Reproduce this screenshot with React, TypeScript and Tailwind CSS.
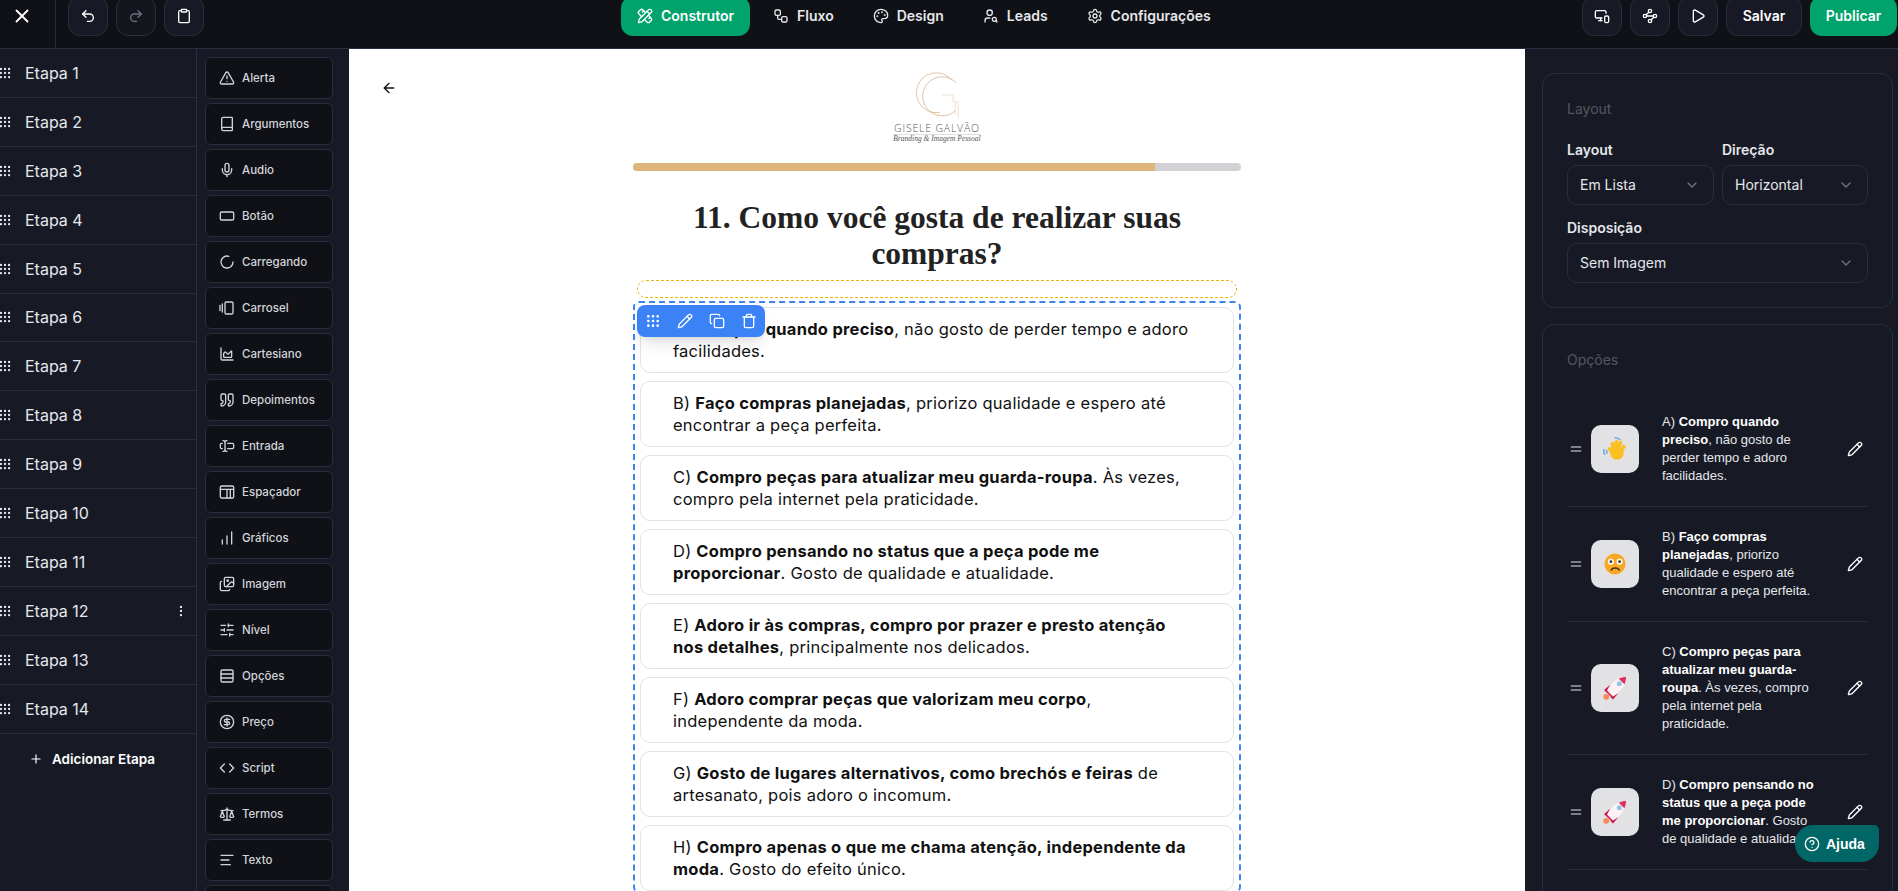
import type { ReactNode } from "react";
import {
  AlignLeft,
  ArrowLeft,
  Book,
  ChartArea,
  ChartNoAxesColumnIncreasing,
  ChevronDown,
  CircleDollarSign,
  CircleHelp,
  Clipboard,
  Code,
  Copy,
  EllipsisVertical,
  Equal,
  Grip,
  Images,
  LoaderCircle,
  MessageSquare,
  Mic,
  MonitorSmartphone,
  Palette,
  Pencil,
  PencilRuler,
  Play,
  Plus,
  Quote,
  RectangleHorizontal,
  Redo2,
  Rows3,
  Scale,
  Settings,
  SlidersHorizontal,
  TextCursorInput,
  Trash,
  TriangleAlert,
  Undo2,
  UserSearch,
  Waypoints,
  Workflow,
  X,
} from "lucide-react";

const CarouselIcon = ({ size = 16 }: { size?: number }) => (
  <svg width={size} height={size} viewBox="0 0 24 24" fill="none" stroke="currentColor" strokeWidth="2" strokeLinecap="round" strokeLinejoin="round">
    <rect x="9" y="3" width="12" height="18" rx="2" />
    <path d="M5 6v12" />
    <path d="M1.5 8v8" />
  </svg>
);

const SpacerIcon = ({ size = 16 }: { size?: number }) => (
  <svg width={size} height={size} viewBox="0 0 24 24" fill="none" stroke="currentColor" strokeWidth="2" strokeLinecap="round" strokeLinejoin="round">
    <rect x="2" y="3" width="20" height="18" rx="2" />
    <path d="M2 8h20" />
    <path d="M12 8v13" />
    <path d="M17 8v13" />
  </svg>
);

const WaveEmoji = () => (
  <svg width="24" height="24" viewBox="0 0 24 24" fill="none">
    <path d="M12 .8c2 0 3.500.5 5 1.700M1 12.500c-.6 1.800-.2 3.500.8 4.800M3.700 13.500c-.3 1-.1 1.800.5 2.600" stroke="#6ea8e8" strokeWidth="1.500" strokeLinecap="round" />
    <g stroke="#fbbf24" strokeWidth="3.600" strokeLinecap="round">
      <path d="M10 13L9.500 6.500" />
      <path d="M12.500 12L13.500 4.500" />
      <path d="M15.500 12L17.500 5.500" />
      <path d="M18 14L21 9.500" />
      <path d="M11 17L6.500 12" />
    </g>
    <ellipse cx="14" cy="16" rx="6.800" ry="6.800" fill="#fbbf24" />
  </svg>
);

const FrownEmoji = () => (
  <svg width="22" height="22" viewBox="0 0 24 24">
    <circle cx="12" cy="12" r="11.500" fill="#f9a825" />
    <circle cx="7.500" cy="9.500" r="3.300" fill="#fff" />
    <circle cx="17" cy="9.500" r="3.300" fill="#fff" />
    <circle cx="7.500" cy="9.500" r="1.500" fill="#3f3028" />
    <circle cx="17" cy="9.500" r="1.500" fill="#3f3028" />
    <path d="M8 18.500c1.500-2.800 7-2.800 8.500 0" fill="none" stroke="#3f3028" strokeWidth="1.800" strokeLinecap="round" />
  </svg>
);

const RocketEmoji = () => (
  <svg width="24" height="24" viewBox="0 0 24 24">
    <circle cx="3.200" cy="20.800" r="2.900" fill="#f58a5c" />
    <path d="M7 9L1 14l2.500 2.500L6.500 14z" fill="#c8184a" />
    <path d="M15 17.500L10 23.500 7.500 21l3-2.500z" fill="#c8184a" />
    <path d="M23 1c0 7-5 15-13 19.500L4 14.500C8 6 16 1 23 1z" fill="#fdf3f5" />
    <path d="M23 1c-2.500 0-5 .7-7.200 1.700l5.600 5.500C22.400 6 23 3.500 23 1z" fill="#dd2e5d" />
    <path d="M4 14.500l6 6-1.500 1L3 16z" fill="#dd2e5d" />
    <circle cx="16.300" cy="7.700" r="2.500" fill="#8ec5e8" />
  </svg>
);

const steps = Array.from({ length: 14 }, (_, i) => `Etapa ${i + 1}`);

const blocks: { label: string; icon: ReactNode }[] = [
  { label: "Alerta", icon: <TriangleAlert size={16} /> },
  { label: "Argumentos", icon: <Book size={16} /> },
  { label: "Audio", icon: <Mic size={16} /> },
  { label: "Botão", icon: <RectangleHorizontal size={16} /> },
  { label: "Carregando", icon: <LoaderCircle size={16} /> },
  { label: "Carrosel", icon: <CarouselIcon /> },
  { label: "Cartesiano", icon: <ChartArea size={16} /> },
  { label: "Depoimentos", icon: <Quote size={16} /> },
  { label: "Entrada", icon: <TextCursorInput size={16} /> },
  { label: "Espaçador", icon: <SpacerIcon /> },
  { label: "Gráficos", icon: <ChartNoAxesColumnIncreasing size={16} /> },
  { label: "Imagem", icon: <Images size={16} /> },
  { label: "Nível", icon: <SlidersHorizontal size={16} /> },
  { label: "Opções", icon: <Rows3 size={16} /> },
  { label: "Preço", icon: <CircleDollarSign size={16} /> },
  { label: "Script", icon: <Code size={16} /> },
  { label: "Termos", icon: <Scale size={16} /> },
  { label: "Texto", icon: <AlignLeft size={16} /> },
  { label: "Vídeo", icon: <MessageSquare size={16} /> },
];

const tabs: { label: string; icon: ReactNode; active?: boolean }[] = [
  { label: "Construtor", icon: <PencilRuler size={16} />, active: true },
  { label: "Fluxo", icon: <Workflow size={16} /> },
  { label: "Design", icon: <Palette size={16} /> },
  { label: "Leads", icon: <UserSearch size={16} /> },
  { label: "Configurações", icon: <Settings size={16} /> },
];

const answers: { letter: string; lines: ReactNode[] }[] = [
  {
    letter: "A",
    lines: [
      <>A) <b>Compro quando preciso</b>, não gosto de perder tempo e adoro</>,
      <>facilidades.</>,
    ],
  },
  {
    letter: "B",
    lines: [
      <>B) <b>Faço compras planejadas</b>, priorizo qualidade e espero até</>,
      <>encontrar a peça perfeita.</>,
    ],
  },
  {
    letter: "C",
    lines: [
      <>C) <b>Compro peças para atualizar meu guarda-roupa</b>. Às vezes,</>,
      <>compro pela internet pela praticidade.</>,
    ],
  },
  {
    letter: "D",
    lines: [
      <>D) <b>Compro pensando no status que a peça pode me</b></>,
      <><b>proporcionar</b>. Gosto de qualidade e atualidade.</>,
    ],
  },
  {
    letter: "E",
    lines: [
      <>E) <b>Adoro ir às compras, compro por prazer e presto atenção</b></>,
      <><b>nos detalhes</b>, principalmente nos delicados.</>,
    ],
  },
  {
    letter: "F",
    lines: [
      <>F) <b>Adoro comprar peças que valorizam meu corpo</b>,</>,
      <>independente da moda.</>,
    ],
  },
  {
    letter: "G",
    lines: [
      <>G) <b>Gosto de lugares alternativos, como brechós e feiras</b> de</>,
      <>artesanato, pois adoro o incomum.</>,
    ],
  },
  {
    letter: "H",
    lines: [
      <>H) <b>Compro apenas o que me chama atenção, independente da</b></>,
      <><b>moda</b>. Gosto do efeito único.</>,
    ],
  },
];

const optionRows: { emoji: ReactNode; text: ReactNode }[] = [
  {
    emoji: <WaveEmoji />,
    text: <>A) <b>Compro quando preciso</b>, não gosto de perder tempo e adoro facilidades.</>,
  },
  {
    emoji: <FrownEmoji />,
    text: <>B) <b>Faço compras planejadas</b>, priorizo qualidade e espero até encontrar a peça perfeita.</>,
  },
  {
    emoji: <RocketEmoji />,
    text: <>C) <b>Compro peças para atualizar meu guarda-roupa</b>. Às vezes, compro pela internet pela praticidade.</>,
  },
  {
    emoji: <RocketEmoji />,
    text: <>D) <b>Compro pensando no status que a peça pode me proporcionar</b>. Gosto de qualidade e atualidade.</>,
  },
  {
    emoji: <RocketEmoji />,
    text: <>E) <b>Adoro ir às compras, compro por prazer e presto atenção nos detalhes</b>, principalmente nos delicados.</>,
  },
];

const IconButton = ({ children, faded }: { children: ReactNode; faded?: boolean }) => (
  <button className={`flex h-10 w-10 items-center justify-center rounded-xl border border-[#252f3f] ${faded ? "bg-[#14161e] text-[#6b7280]" : "bg-[#171a25] text-white"}`}>
    {children}
  </button>
);

const Select = ({ value, className }: { value: string; className: string }) => (
  <div className={`flex h-10 items-center justify-between rounded-[10px] border border-[#252f3f] pl-[12px] pr-[13px] text-sm text-[#e5e7eb] ${className}`}>
    <span>{value}</span>
    <ChevronDown size={16} className="text-[#6b7280]" />
  </div>
);

const TopBar = () => (
  <header className="flex h-[49px] shrink-0 items-end overflow-hidden border-b border-[#252f3f] bg-[#101116]">
    <div className="flex w-[621px] shrink-0 items-end">
      <div className="flex h-12 w-[56px] shrink-0 items-center border-r border-[#252f3f] pb-4 pl-[11px] text-white">
        <X size={22} />
      </div>
      <div className="flex gap-2 pb-3 pl-3">
        <IconButton><Undo2 size={16} /></IconButton>
        <IconButton faded><Redo2 size={16} /></IconButton>
        <IconButton><Clipboard size={16} /></IconButton>
      </div>
    </div>
    <nav className="flex gap-[7px] pb-3 text-sm font-semibold text-[#e5e7eb]">
      {tabs.map((tab) => (
        <button
          key={tab.label}
          className={`flex h-10 items-center gap-2 rounded-xl px-4 ${tab.active ? "bg-[#00a36c] text-white" : ""}`}
        >
          {tab.icon}
          {tab.label}
        </button>
      ))}
    </nav>
    <div className="ml-auto flex gap-2 pb-3 pr-px">
      <IconButton><MonitorSmartphone size={16} /></IconButton>
      <IconButton><Waypoints size={16} /></IconButton>
      <IconButton><Play size={16} /></IconButton>
      <button className="h-10 w-[76px] rounded-xl border border-[#252f3f] bg-[#171a25] text-sm font-semibold text-white">
        Salvar
      </button>
      <button className="h-10 w-[87px] rounded-xl bg-[#00a36c] text-sm font-semibold text-white">
        Publicar
      </button>
    </div>
  </header>
);

const StepsPanel = () => (
  <aside className="w-[197px] shrink-0 border-r border-[#252f3f] bg-[#171a25]">
    {steps.map((step) => (
      <div
        key={step}
        className="flex h-[48.92px] items-center border-b border-[#252f3f] pr-[8px] text-[#e5e7eb]"
      >
        <Grip size={14} className="-ml-[2px] shrink-0" />
        <span className="ml-[13px] flex-1 text-base">{step}</span>
        {step === "Etapa 12" && <EllipsisVertical size={14} />}
      </div>
    ))}
    <button className="flex w-full items-center gap-[9px] pl-[29px] pt-[15px] text-[13.5px] font-semibold text-white">
      <Plus size={14} />
      Adicionar Etapa
    </button>
  </aside>
);

const BlocksPanel = () => (
  <aside className="flex w-[152px] shrink-0 flex-col gap-1 bg-[#171a25] pl-2 pr-4 pt-2">
    {blocks.map((block) => (
      <div
        key={block.label}
        className="flex h-[42px] shrink-0 items-center gap-[7px] rounded-md border border-[#252f3f] bg-[#101116] pl-[13px] text-[11.5px] font-medium text-[#d1d5db]"
      >
        {block.icon}
        <span className="pt-px">{block.label}</span>
      </div>
    ))}
  </aside>
);

const Logo = () => (
  <div className="flex flex-col items-center">
    <svg width="50" height="50" viewBox="0 0 50 50" fill="none" stroke="#d9b48f" strokeWidth="0.8">
      <path d="M39.700 10A20 20 0 1 0 28 42.400" />
      <path d="M44.700 13.300A19.500 19.500 0 1 0 43 41" />
      <path d="M29.700 25H41v7h5.300v16M43.300 32v13" stroke="#ecd9c5" />
    </svg>
    <span className="mt-[2px] text-[10.5px] font-light leading-3 tracking-[0.8px] text-[#555] [font-family:'Open_Sans',sans-serif]">GISELE GALVÃO</span>
    <span className="border-t border-[#ddd] text-[7.500px] italic leading-[8px] text-[#555] [font-family:'Liberation_Serif',serif]">Branding &amp; Imagem Pessoal</span>
  </div>
);

const Canvas = () => (
  <main className="min-w-0 flex-1 overflow-hidden bg-white text-[#111]">
    <div className="grid grid-cols-[1fr_auto_1fr] pt-[21px]">
      <ArrowLeft size={16} className="ml-[32px] mt-[10px] text-[#111]" />
      <Logo />
    </div>
    <div className="mx-auto flex w-[608px] flex-col items-center pt-[20px]">
      <div className="h-2 w-full overflow-hidden rounded-full bg-[#d1d1d6]">
        <div className="h-full w-[85.8%] bg-[#deb57c]" />
      </div>
      <h1 className="mt-[29px] w-[520px] text-center text-[31.500px] font-bold leading-[36px] text-[#222] [font-family:'Liberation_Serif',serif]">
        11. Como você gosta de realizar suas compras?
      </h1>
      <div className="mt-2 h-[18px] w-[600px] rounded-[9px] border border-dashed border-[#eab308]" />
      <div className="relative mt-[3px] flex w-full flex-col gap-2 rounded-md border-2 border-dashed border-[#3b82f6] px-[5px] pt-1 font-['Inter',sans-serif]">
        <div className="absolute left-[2px] top-[2px] flex h-8 w-32 items-center gap-4 rounded-lg bg-[#3b82f6] pl-2 text-white shadow-lg">
          <Grip size={16} />
          <Pencil size={16} />
          <Copy size={16} />
          <Trash size={16} />
        </div>
        {answers.map((answer) => (
          <div
            key={answer.letter}
            className="flex h-[66px] shrink-0 flex-col justify-center rounded-[10px] border border-[#e2e2e5] pl-8 text-[16.500px] leading-[22px] tracking-[0.25px]"
          >
            {answer.lines.map((line, i) => (
              <div key={i} className="whitespace-nowrap">{line}</div>
            ))}
          </div>
        ))}
      </div>
    </div>
  </main>
);

const SettingsPanel = () => (
  <aside className="flex w-[373px] shrink-0 flex-col gap-4 overflow-hidden bg-[#171a25] pl-[17px] pr-[5px] pt-6">
    <section className="shrink-0 rounded-xl border border-[#252f3f] px-6 pb-6 pt-[25px]">
      <h2 className="text-sm leading-5 text-[#55575e]">Layout</h2>
      <div className="mt-[21px] grid grid-cols-[147px_146px] gap-x-2">
        <div>
          <div className="text-sm font-semibold leading-5 text-[#e5e7eb]">Layout</div>
          <Select value="Em Lista" className="mt-[5px]" />
        </div>
        <div>
          <div className="text-sm font-semibold leading-5 text-[#e5e7eb]">Direção</div>
          <Select value="Horizontal" className="mt-[5px]" />
        </div>
      </div>
      <div className="mt-[13px] text-sm font-semibold leading-5 text-[#e5e7eb]">Disposição</div>
      <Select value="Sem Imagem" className="mt-[5px]" />
    </section>
    <section className="shrink-0 rounded-xl border border-[#252f3f] px-6 pt-[25px]">
      <h2 className="text-sm leading-5 text-[#55575e]">Opções</h2>
      <div className="mt-[22px]">
        {optionRows.map((row, i) => (
          <div
            key={i}
            className="flex items-center border-b border-[#252f3f] py-[21px] [font-family:'Liberation_Sans',sans-serif]"
          >
            <Equal size={16} className="ml-px shrink-0 text-[#9ca3af]" />
            <div className="ml-[7px] flex h-12 w-12 shrink-0 items-center justify-center rounded-[10px] bg-[#e2e2e5]">
              {row.emoji}
            </div>
            <p className="ml-[23px] w-[160px] text-[13px] leading-[18px] text-[#e5e7eb] [&_b]:text-white">
              {row.text}
            </p>
            <Pencil size={16} className="ml-auto mr-[5px] shrink-0 text-white" />
          </div>
        ))}
      </div>
    </section>
  </aside>
);

const App = () => {
  return (
    <div className="relative flex h-screen w-screen flex-col overflow-hidden font-['Inter',sans-serif]">
      <TopBar />
      <div className="flex min-h-0 flex-1">
        <StepsPanel />
        <BlocksPanel />
        <Canvas />
        <SettingsPanel />
      </div>
      <button className="absolute bottom-[29px] right-[19px] flex h-[37px] w-[84px] items-center gap-[6px] rounded-[18px] rounded-tr-[5px] bg-[#006666] pl-[9px] text-sm font-bold text-white [font-family:'Liberation_Sans',sans-serif]">
        <CircleHelp size={16} />
        Ajuda
      </button>
    </div>
  );
};

export default App;
